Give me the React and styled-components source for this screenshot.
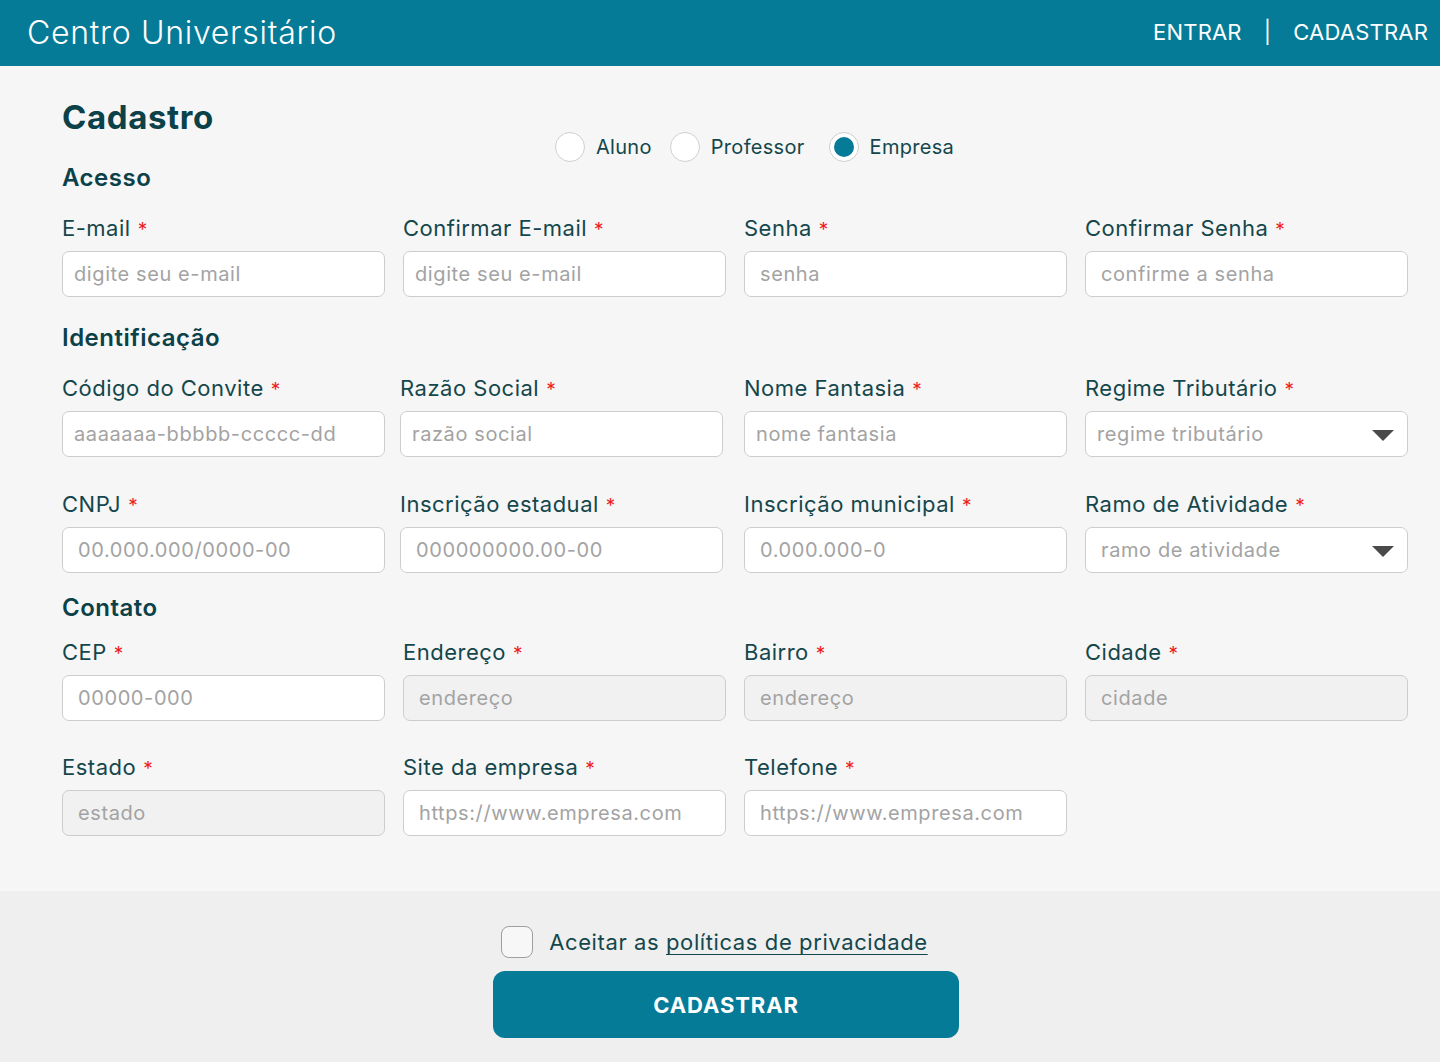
import React from "react";
import styled, { createGlobalStyle } from "styled-components";

const Global = createGlobalStyle`
  html, body { margin: 0; padding: 0; }
  body { background: #f6f6f6; font-family: "Inter", "Open Sans", sans-serif; color: #0e454b; }
  * { box-sizing: border-box; }
`;

const Page = styled.div`
  width: 1440px;
  min-height: 1062px;
  display: flex;
  flex-direction: column;
  background: #f6f6f6;
`;

const TopBar = styled.header`
  height: 66px;
  background: #057b97;
  display: flex;
  align-items: center;
  justify-content: space-between;
  padding: 0 12px 0 27px;
  color: #fff;
`;

const Brand = styled.div`
  font-size: 32px;
  font-weight: 300;
  letter-spacing: 0.7px;
  margin-top: -2px;
`;

const Nav = styled.nav`
  display: flex;
  align-items: center;
  gap: 22px;
  font-size: 22px;
  font-weight: 400;
  letter-spacing: 0.2px;
  margin-top: -2px;
`;

const Main = styled.main`
  padding: 33px 32px 50px 62px;
  flex: 1;
`;

const Title = styled.h1`
  margin: 0;
  font-size: 33px;
  font-weight: 700;
  letter-spacing: 0.6px;
  color: #0b4148;
  line-height: 36px;
`;

const RadioRow = styled.div`
  display: flex;
  align-items: center;
  margin: -3px 0 0 493px;
  height: 30px;
`;

const RadioOption = styled.label`
  display: flex;
  align-items: center;
  gap: 11px;
  margin-right: ${(p) => p.$mr}px;
  font-size: 20px;
  letter-spacing: 0.3px;
  color: #14474c;
`;

const RadioCircle = styled.span`
  width: 30px;
  height: 30px;
  border-radius: 50%;
  border: 1px solid #cfcfcf;
  background: #fff;
  display: flex;
  align-items: center;
  justify-content: center;
  &::after {
    content: "";
    display: ${(p) => (p.$checked ? "block" : "none")};
    width: 20px;
    height: 20px;
    border-radius: 50%;
    background: #057b97;
  }
`;

const SectionTitle = styled.h2`
  margin: ${(p) => p.$mt}px 0 0;
  font-size: 24px;
  font-weight: 600;
  letter-spacing: 0.5px;
  color: #0b4148;
  line-height: 30px;
`;

const Row = styled.div`
  display: flex;
  margin-top: ${(p) => p.$mt}px;
`;

const Field = styled.div`
  width: 323px;
  flex: 0 0 323px;
  margin-left: ${(p) => p.$ml ?? 18}px;
  display: flex;
  flex-direction: column;
  &:first-child { margin-left: 0; }
`;

const Label = styled.label`
  font-size: 22px;
  font-weight: 400;
  letter-spacing: 0.5px;
  color: #14474c;
  line-height: 26px;
  height: 26px;
  margin-bottom: 10px;
  white-space: nowrap;
`;

const Star = styled.span`
  color: #ee1c1c;
  margin-left: 7px;
  font-size: 19px;
`;

const InputBox = styled.div`
  position: relative;
  height: 46px;
  border: 1px solid #cdcdcd;
  border-radius: 7px;
  background: ${(p) => (p.$disabled ? "#f1f1f1" : "#fff")};
  display: flex;
  align-items: center;
`;

const Input = styled.input`
  border: none;
  outline: none;
  background: transparent;
  width: 100%;
  height: 100%;
  padding: 0 40px 0 ${(p) => p.$pl}px;
  font-family: inherit;
  font-size: 20px;
  letter-spacing: 0.6px;
  color: #333;
  &::placeholder { color: #a3a3a3; font-weight: 400; }
`;

const Caret = styled.span`
  position: absolute;
  right: 13px;
  top: 18px;
  width: 0;
  height: 0;
  border-left: 11px solid transparent;
  border-right: 11px solid transparent;
  border-top: 11px solid #4a4a4a;
`;

const Footer = styled.footer`
  background: #efefef;
  height: 171px;
  display: flex;
  flex-direction: column;
  align-items: center;
  padding-top: 35px;
`;

const AcceptRow = styled.div`
  display: flex;
  align-items: center;
  gap: 16px;
  margin-right: 11px;
  font-size: 22px;
  letter-spacing: 0.6px;
  color: #14474c;
`;

const Box = styled.span`
  width: 32px;
  height: 32px;
  border: 1px solid #9f9f9f;
  border-radius: 8px;
  background: #f7f7f7;
`;

const Link = styled.a`
  color: #14474c;
  text-decoration: underline;
  text-underline-offset: 4px;
  text-decoration-thickness: 1px;
`;

const SubmitButton = styled.button`
  margin-top: 13px;
  margin-left: 12px;
  width: 466px;
  height: 67px;
  border: none;
  border-radius: 12px;
  background: #057b97;
  color: #fff;
  font-family: inherit;
  font-size: 22px;
  font-weight: 700;
  letter-spacing: 0.9px;
`;

function FormField({ label, placeholder, pl = 11, disabled, select, ml }) {
  return (
    <Field $ml={ml}>
      <Label>
        {label}
        <Star>*</Star>
      </Label>
      <InputBox $disabled={disabled}>
        <Input placeholder={placeholder} $pl={pl} disabled={disabled} readOnly />
        {select && <Caret />}
      </InputBox>
    </Field>
  );
}

export default function App() {
  return (
    <Page>
      <Global />
      <TopBar>
        <Brand>Centro Universitário</Brand>
        <Nav>
          <span>ENTRAR</span>
          <span>|</span>
          <span>CADASTRAR</span>
        </Nav>
      </TopBar>
      <Main>
        <Title>Cadastro</Title>
        <RadioRow>
          <RadioOption $mr={18}>
            <RadioCircle />
            Aluno
          </RadioOption>
          <RadioOption $mr={24}>
            <RadioCircle />
            Professor
          </RadioOption>
          <RadioOption $mr={0}>
            <RadioCircle $checked />
            Empresa
          </RadioOption>
        </RadioRow>

        <SectionTitle $mt={1}>Acesso</SectionTitle>
        <Row $mt={22}>
          <FormField label="E-mail" placeholder="digite seu e-mail" pl={11} />
          <FormField label="Confirmar E-mail" placeholder="digite seu e-mail" pl={11} />
          <FormField label="Senha" placeholder="senha" pl={15} />
          <FormField label="Confirmar Senha" placeholder="confirme a senha" pl={15} />
        </Row>

        <SectionTitle $mt={26}>Identificação</SectionTitle>
        <Row $mt={22}>
          <FormField label="Código do Convite" placeholder="aaaaaaa-bbbbb-ccccc-dd" pl={11} />
          <FormField label="Razão Social" placeholder="razão social" pl={11} ml={15} />
          <FormField label="Nome Fantasia" placeholder="nome fantasia" pl={11} ml={21} />
          <FormField label="Regime Tributário" placeholder="regime tributário" pl={11} select />
        </Row>
        <Row $mt={34}>
          <FormField label="CNPJ" placeholder="00.000.000/0000-00" pl={15} />
          <FormField label="Inscrição estadual" placeholder="000000000.00-00" pl={15} ml={15} />
          <FormField label="Inscrição municipal" placeholder="0.000.000-0" pl={15} ml={21} />
          <FormField label="Ramo de Atividade" placeholder="ramo de atividade" pl={15} select />
        </Row>

        <SectionTitle $mt={20}>Contato</SectionTitle>
        <Row $mt={16}>
          <FormField label="CEP" placeholder="00000-000" pl={15} />
          <FormField label="Endereço" placeholder="endereço" pl={15} disabled />
          <FormField label="Bairro" placeholder="endereço" pl={15} disabled />
          <FormField label="Cidade" placeholder="cidade" pl={15} disabled />
        </Row>
        <Row $mt={33}>
          <FormField label="Estado" placeholder="estado" pl={15} disabled />
          <FormField label="Site da empresa" placeholder="https://www.empresa.com" pl={15} />
          <FormField label="Telefone" placeholder="https://www.empresa.com" pl={15} />
        </Row>
      </Main>
      <Footer>
        <AcceptRow>
          <Box />
          <span>
            Aceitar as <Link>políticas de privacidade</Link>
          </span>
        </AcceptRow>
        <SubmitButton>CADASTRAR</SubmitButton>
      </Footer>
    </Page>
  );
}
